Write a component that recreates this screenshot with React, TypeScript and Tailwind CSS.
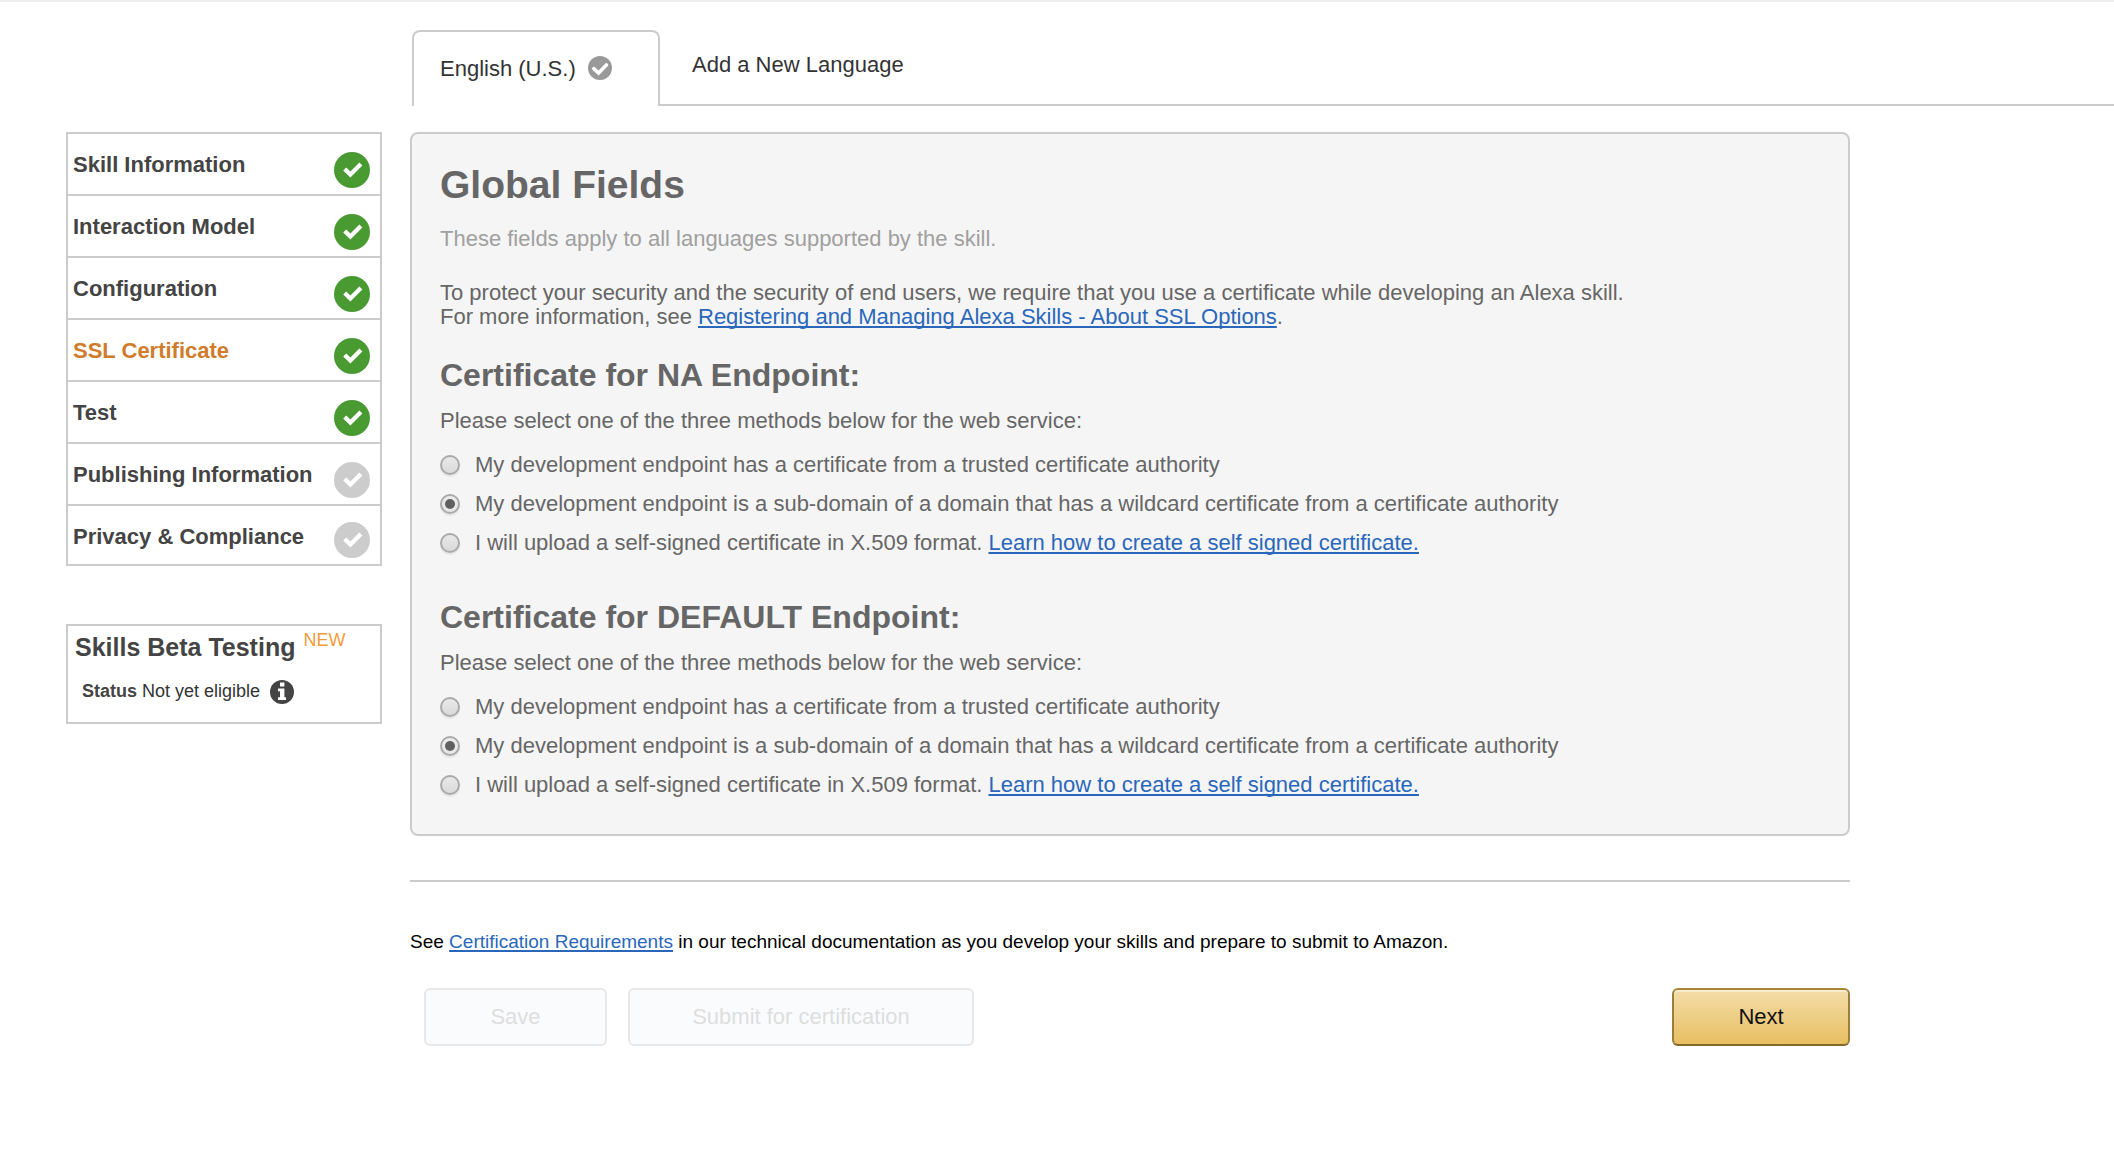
import { useState } from 'react'

type Step = { label: string; done: boolean; active?: boolean }

const steps: Step[] = [
  { label: 'Skill Information', done: true },
  { label: 'Interaction Model', done: true },
  { label: 'Configuration', done: true },
  { label: 'SSL Certificate', done: true, active: true },
  { label: 'Test', done: true },
  { label: 'Publishing Information', done: false },
  { label: 'Privacy & Compliance', done: false },
]

const linkClass =
  'text-[#2a67bb] underline decoration-2 underline-offset-2 [text-decoration-skip-ink:none]'

function StepCheck({ done }: { done: boolean }) {
  return (
    <svg viewBox="0 0 36 36" className="size-9 shrink-0" aria-hidden="true">
      <circle cx="18" cy="18" r="18" fill={done ? '#4a9a32' : '#cccccc'} />
      <path d="M9.2 18.4 12.2 15.4 16.4 19.6 25.4 10.6 28.4 13.6 16.4 25.5Z" fill="#fff" />
    </svg>
  )
}

function TabCheck() {
  return (
    <svg viewBox="0 0 24 24" className="size-6" aria-hidden="true">
      <circle cx="12" cy="12" r="12" fill="#999999" />
      <path
        d="M5.8 12.6 10.6 17 18.4 9"
        fill="none"
        stroke="#fff"
        strokeWidth="3.6"
        strokeLinecap="round"
      />
    </svg>
  )
}

function InfoIcon() {
  return (
    <svg viewBox="0 0 24 24" className="size-6" aria-hidden="true">
      <circle cx="12" cy="12" r="12" fill="#444444" />
      <path d="M10 2.6h4.4v3.8H10ZM8 8.4h6.4v8.8H16V20H8v-2.8h2v-6H8Z" fill="#fff" />
    </svg>
  )
}

function Tabs() {
  return (
    <div className="flex pl-[412px] text-[22px] leading-[26px] text-[#333]">
      <button
        type="button"
        className="flex h-[76px] w-[248px] items-start gap-3 rounded-t-lg border-2 border-b-0 border-[#ccc] pt-6 pl-[26px]"
      >
        English (U.S.)
        <TabCheck />
      </button>
      <div className="flex flex-1 items-start border-b-2 border-[#ccc] pt-[22px] pl-8">
        <button type="button">Add a New Language</button>
      </div>
    </div>
  )
}

function StepNav() {
  return (
    <nav>
      <ul className="border-2 border-[#ccc]">
        {steps.map((step) => (
          <li key={step.label} className="group border-[#ccc] not-last:border-b-2">
            <a
              href="#"
              className={
                'flex h-[60px] items-end justify-between pr-[10px] pb-[6px] pl-[5px] text-[22px] leading-[26px] font-bold group-last:h-[58px] ' +
                (step.active ? 'text-[#d17b2c]' : 'text-[#444]')
              }
            >
              <span className="self-start pt-[18px]">{step.label}</span>
              <StepCheck done={step.done} />
            </a>
          </li>
        ))}
      </ul>
    </nav>
  )
}

function BetaBox() {
  return (
    <section className="mt-[58px] h-[100px] border-2 border-[#ccc] pl-[7px]">
      <h2 className="flex items-start gap-2 pt-[6px] text-[25px] leading-[30px] font-bold text-[#444]">
        Skills Beta Testing
        <span className="text-lg leading-4 font-normal text-[#f39c3c]">NEW</span>
      </h2>
      <p className="flex items-start gap-[10px] pt-[18px] pl-[7px] text-lg leading-[22px] text-[#333]">
        <span>
          <b className="text-[#444]">Status</b> Not yet eligible
        </span>
        <InfoIcon />
      </p>
    </section>
  )
}

function Option({
  name,
  text,
  link,
  checked,
  onSelect,
}: {
  name: string
  text: string
  link?: string
  checked: boolean
  onSelect: () => void
}) {
  return (
    <div className="flex items-center">
      <label className="flex items-center gap-[15px]">
        <input
          type="radio"
          name={name}
          checked={checked}
          onChange={onSelect}
          className="flex size-5 shrink-0 appearance-none items-center justify-center rounded-full border-2 border-[#aaa] bg-linear-to-b from-[#e9e9e9] to-[#d9d9d9] shadow-[0_2px_1px_#e6e6e6] checked:from-[#ededed] checked:to-[#e6e6e6] checked:before:size-[10px] checked:before:rounded-full checked:before:bg-[#606060]"
        />
        {text}
      </label>
      {link && (
        <a href="#" className={linkClass + ' ml-[6px]'}>
          {link}
        </a>
      )}
    </div>
  )
}

const options = [
  { text: 'My development endpoint has a certificate from a trusted certificate authority' },
  {
    text: 'My development endpoint is a sub-domain of a domain that has a wildcard certificate from a certificate authority',
  },
  {
    text: 'I will upload a self-signed certificate in X.509 format.',
    link: 'Learn how to create a self signed certificate.',
  },
]

function Endpoint({ name }: { name: string }) {
  const [selected, setSelected] = useState(1)
  return (
    <section>
      <h2 className="text-[32px] leading-9 font-bold">Certificate for {name} Endpoint:</h2>
      <p className="mt-4">Please select one of the three methods below for the web service:</p>
      <div className="mt-5 flex flex-col gap-[15px]">
        {options.map((option, i) => (
          <Option
            key={option.text}
            name={name}
            text={option.text}
            link={option.link}
            checked={selected === i}
            onSelect={() => setSelected(i)}
          />
        ))}
      </div>
    </section>
  )
}

export default function App() {
  return (
    <div className="min-h-screen border-t-2 border-[#eee] bg-white pt-7 font-['Liberation_Sans',Arial,sans-serif]">
      <Tabs />
      <div className="mt-[26px] flex items-start gap-7 pr-[264px] pl-[66px]">
        <aside className="w-[316px] shrink-0">
          <StepNav />
          <BetaBox />
        </aside>
        <main className="min-w-0 flex-1">
          <div className="rounded-lg border-2 border-[#ccc] bg-[#f5f5f5] px-7 pt-[29px] pb-[37px] text-[22px] leading-6 text-[#666]">
            <h1 className="text-[39px] leading-[44px] font-bold">Global Fields</h1>
            <p className="mt-5 text-[#a0a0a0]">
              These fields apply to all languages supported by the skill.
            </p>
            <p className="mt-[30px] mb-7">
              To protect your security and the security of end users, we require that you use a
              certificate while developing an Alexa skill.
              <br />
              For more information, see{' '}
              <a href="#" className={linkClass}>
                Registering and Managing Alexa Skills - About SSL Options
              </a>
              .
            </p>
            <div className="flex flex-col gap-11">
              <Endpoint name="NA" />
              <Endpoint name="DEFAULT" />
            </div>
          </div>
          <hr className="mt-11 border-t-2 border-[#ccc]" />
          <p className="mt-[49px] text-[19px] leading-[22px] text-black">
            See{' '}
            <a href="#" className={linkClass}>
              Certification Requirements
            </a>{' '}
            in our technical documentation as you develop your skills and prepare to submit to
            Amazon.
          </p>
          <div className="mt-[35px] flex pl-[14px] text-[22px] leading-6">
            <button
              type="button"
              disabled
              className="h-[58px] w-[183px] rounded-md border-2 border-[#e8e8e8] bg-[#fafbfd] text-[#dedede]"
            >
              Save
            </button>
            <button
              type="button"
              disabled
              className="ml-[21px] h-[58px] w-[346px] rounded-md border-2 border-[#e8e8e8] bg-[#fafbfd] text-[#dedede]"
            >
              Submit for certification
            </button>
            <button
              type="button"
              className="ml-auto h-[58px] w-[178px] rounded-md border-2 border-[#9c7e3c] border-t-[#a88734] border-b-[#846a29] bg-linear-to-b from-[#f3dda9] to-[#e8bf60] text-[#111] shadow-[inset_0_2px_0_#f9edd0]"
            >
              Next
            </button>
          </div>
        </main>
      </div>
    </div>
  )
}
